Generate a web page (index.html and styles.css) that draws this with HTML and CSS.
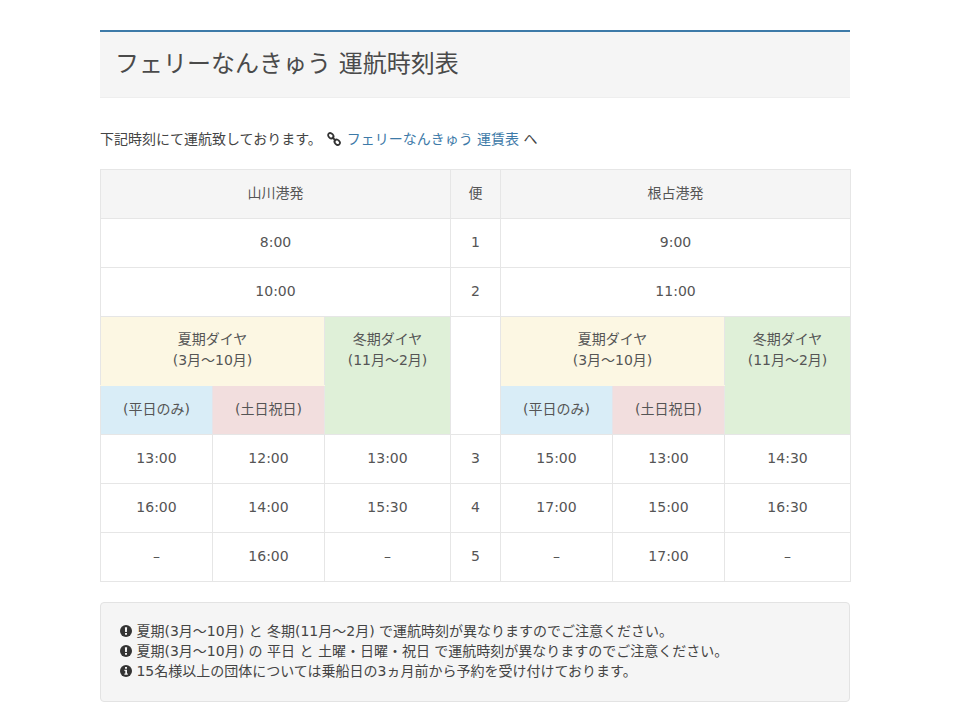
FILE: index.html
```html
<!DOCTYPE html>
<html lang="ja">
<head>
<meta charset="utf-8">
<title>フェリーなんきゅう 運航時刻表</title>
<link rel="stylesheet" href="styles.css">
</head>
<body>
<main class="page">
  <h1 class="title">フェリーなんきゅう 運航時刻表</h1>
  <p class="lead">下記時刻にて運航致しております。 <svg class="ic-link" viewBox="0 0 14 14"><g fill="none" stroke="#333" stroke-width="1.8"><ellipse cx="3.8" cy="3.8" rx="3" ry="2.3" transform="rotate(45 3.8 3.8)"/><ellipse cx="10.2" cy="10.2" rx="3" ry="2.3" transform="rotate(45 10.2 10.2)"/><path d="M5 5l4 4"/></g></svg> <a class="link" href="#">フェリーなんきゅう 運賃表</a> へ</p>
  <table class="times">
    <colgroup>
      <col class="c1"><col class="c1"><col class="c2"><col class="c3"><col class="c1"><col class="c1"><col class="c2">
    </colgroup>
    <tbody>
      <tr class="row"><th colspan="3" class="head">山川港発</th><th class="head">便</th><th colspan="3" class="head">根占港発</th></tr>
      <tr class="row"><td colspan="3">8:00</td><td>1</td><td colspan="3">9:00</td></tr>
      <tr class="row"><td colspan="3">10:00</td><td>2</td><td colspan="3">11:00</td></tr>
      <tr class="row-tall">
        <td colspan="2" class="summer">夏期ダイヤ<br>(3月～10月)</td>
        <td rowspan="2" class="winter">冬期ダイヤ<br>(11月～2月)</td>
        <td rowspan="2"></td>
        <td colspan="2" class="summer">夏期ダイヤ<br>(3月～10月)</td>
        <td rowspan="2" class="winter">冬期ダイヤ<br>(11月～2月)</td>
      </tr>
      <tr class="row">
        <td class="weekday">(平日のみ)</td><td class="holiday">(土日祝日)</td>
        <td class="weekday">(平日のみ)</td><td class="holiday">(土日祝日)</td>
      </tr>
      <tr class="row"><td>13:00</td><td>12:00</td><td>13:00</td><td>3</td><td>15:00</td><td>13:00</td><td>14:30</td></tr>
      <tr class="row"><td>16:00</td><td>14:00</td><td>15:30</td><td>4</td><td>17:00</td><td>15:00</td><td>16:30</td></tr>
      <tr class="row"><td>–</td><td>16:00</td><td>–</td><td>5</td><td>–</td><td>17:00</td><td>–</td></tr>
    </tbody>
  </table>
  <div class="notes">
    <div class="note"><svg class="ic" viewBox="0 0 12 12"><circle cx="6" cy="6" r="6" fill="#333"/><path d="M4.9 2.2h2.2l-.2 4.9H5.1zM5 8h2v1.8H5z" fill="#f5f5f5"/></svg> 夏期(3月～10月) と 冬期(11月～2月) で運航時刻が異なりますのでご注意ください。</div>
    <div class="note"><svg class="ic" viewBox="0 0 12 12"><circle cx="6" cy="6" r="6" fill="#333"/><path d="M4.9 2.2h2.2l-.2 4.9H5.1zM5 8h2v1.8H5z" fill="#f5f5f5"/></svg> 夏期(3月～10月) の 平日 と 土曜・日曜・祝日 で運航時刻が異なりますのでご注意ください。</div>
    <div class="note"><svg class="ic" viewBox="0 0 12 12"><circle cx="6" cy="6" r="6" fill="#333"/><path d="M5 2h2v1.7H5zM4.4 4.8H7v3.6h.8v1.3H4.4V8.4h.9V6.1h-.9z" fill="#f5f5f5"/></svg> 15名様以上の団体については乗船日の3ヵ月前から予約を受け付けております。</div>
  </div>
</main>
</body>
</html>
```
FILE: styles.css
```css
* { box-sizing: border-box; }
html, body { margin: 0; padding: 0; background: #fff; }
body {
  font-family: "DejaVu Sans", "Noto Sans CJK JP", sans-serif;
  font-size: 14px;
  line-height: 20px;
  color: #555;
  height: 716px;
  overflow: hidden;
}
.page { width: 750px; margin-left: 100px; padding-top: 30px; }
.title {
  margin: 0;
  height: 68px;
  padding: 0 15px;
  background: #f5f5f5;
  border-top: 2px solid #3d7aa8;
  border-bottom: 1px solid #eee;
  font-size: 24px;
  font-weight: 400;
  line-height: 65px;
  color: #4a4a4a;
}
.lead { margin: 31px 0 20px; color: #444; }
.ic-link { width: 14px; height: 14px; vertical-align: -2px; margin: 0 1px 0 1px; }
.link { color: #3d7aa8; text-decoration: none; }
.times {
  width: 751px;
  margin-right: -1px;
  table-layout: fixed;
  border-collapse: collapse;
  text-align: center;
  font-size: 14px;
  line-height: 21px;
}
.c1 { width: 112px; }
.c2 { width: 126px; }
.c3 { width: 50px; }
.times th, .times td { border: 1px solid #e6e6e6; padding: 0 8px 2px; font-weight: 400; }
.row { height: 49px; }
.row-tall { height: 69px; }
.head { background: #f5f5f5; }
.summer { background: #fcf7e3; border-bottom-color: #fcf7e3 !important; vertical-align: top; padding-top: 12px !important; }
.winter { background: #dff0d8; vertical-align: top; padding-top: 12px !important; }
.weekday { background: #d9edf7; border-right-color: #e6e3e8 !important; border-top-color: #fcf7e3 !important; }
.holiday { background: #f2dede; border-top-color: #fcf7e3 !important; }
.notes {
  margin-top: 20px;
  height: 100px;
  padding: 18px 19px;
  background: #f5f5f5;
  border: 1px solid #e3e3e3;
  border-radius: 4px;
  color: #444;
}
.ic { width: 12px; height: 12px; vertical-align: -1px; }
```
